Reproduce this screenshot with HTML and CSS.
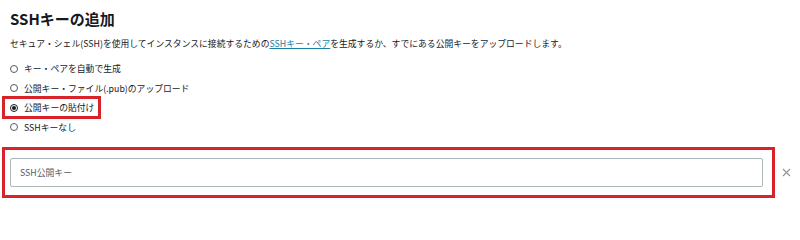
FILE: index.html
```html
<!DOCTYPE html>
<html lang="ja">
<head>
<meta charset="utf-8">
<link rel="stylesheet" href="styles.css">
</head>
<body>
<div class="page">
  <h1 class="title">SSHキーの追加</h1>
  <p class="desc">セキュア・シェル(SSH)を使用してインスタンスに接続するための<a class="link" href="#">SSHキー・ペア</a>を生成するか、すでにある公開キーをアップロードします。</p>
  <div class="options">
    <div class="option"><span class="radio"></span><span class="label">キー・ペアを自動で生成</span></div>
    <div class="option"><span class="radio"></span><span class="label">公開キー・ファイル(.pub)のアップロード</span></div>
    <div class="option highlight"><span class="radio checked"></span><span class="label">公開キーの貼付け</span></div>
    <div class="option"><span class="radio"></span><span class="label">SSHキーなし</span></div>
  </div>
  <div class="key-row">
    <div class="key-box">
      <div class="key-input">SSH公開キー</div>
    </div>
    <svg class="close" width="9" height="9" viewBox="0 0 9 9"><path d="M1 1L8 8M8 1L1 8" stroke="#8d9596" stroke-width="1.1" fill="none"/></svg>
  </div>
</div>
</body>
</html>
```

FILE: styles.css
```css
html, body {
  margin: 0;
  padding: 0;
  background: #ffffff;
}
body {
  font-family: "Noto Sans CJK JP", "Noto Sans", sans-serif;
  color: #16191f;
}
.page {
  padding-top: 7px;
}
.title {
  margin: 0 0 0 10px;
  font-size: 15px;
  line-height: 24px;
  font-weight: 700;
}
.desc {
  margin: 6px 0 0 10px;
  font-size: 8.8px;
  line-height: 14px;
  color: #16191f;
}
.link {
  color: #1a7fa3;
  text-decoration: underline;
}
.options {
  margin-top: 8px;
  display: flex;
  flex-direction: column;
  align-items: flex-start;
}
.option {
  display: inline-flex;
  align-items: center;
  height: 19.5px;
  margin-left: 10px;
  gap: 6px;
  font-size: 8.8px;
  position: relative;
}
.radio {
  width: 8px;
  height: 8px;
  border: 1px solid #545b64;
  border-radius: 50%;
  box-sizing: border-box;
  display: flex;
  align-items: center;
  justify-content: center;
}
.radio.checked {
  border-color: #16191f;
}
.radio.checked::before {
  content: "";
  width: 4px;
  height: 4px;
  border-radius: 50%;
  background: #16191f;
}
.highlight::after {
  content: "";
  position: absolute;
  left: -8px;
  right: -7px;
  top: -2px;
  bottom: -1px;
  border: 3px solid #d9232a;
  pointer-events: none;
}
.key-row {
  margin: 10px 0 0 2px;
  display: flex;
  align-items: center;
  gap: 7px;
}
.key-box {
  width: 773px;
  box-sizing: border-box;
  border: 3px solid #d9232a;
  padding: 8px 9px 8px 5px;
}
.key-input {
  height: 29px;
  box-sizing: border-box;
  border: 1px solid #aab7b8;
  border-radius: 2px;
  padding-left: 9px;
  display: flex;
  align-items: center;
  font-size: 8.8px;
  color: #545b64;
}
.close {
  display: block;
}
```
